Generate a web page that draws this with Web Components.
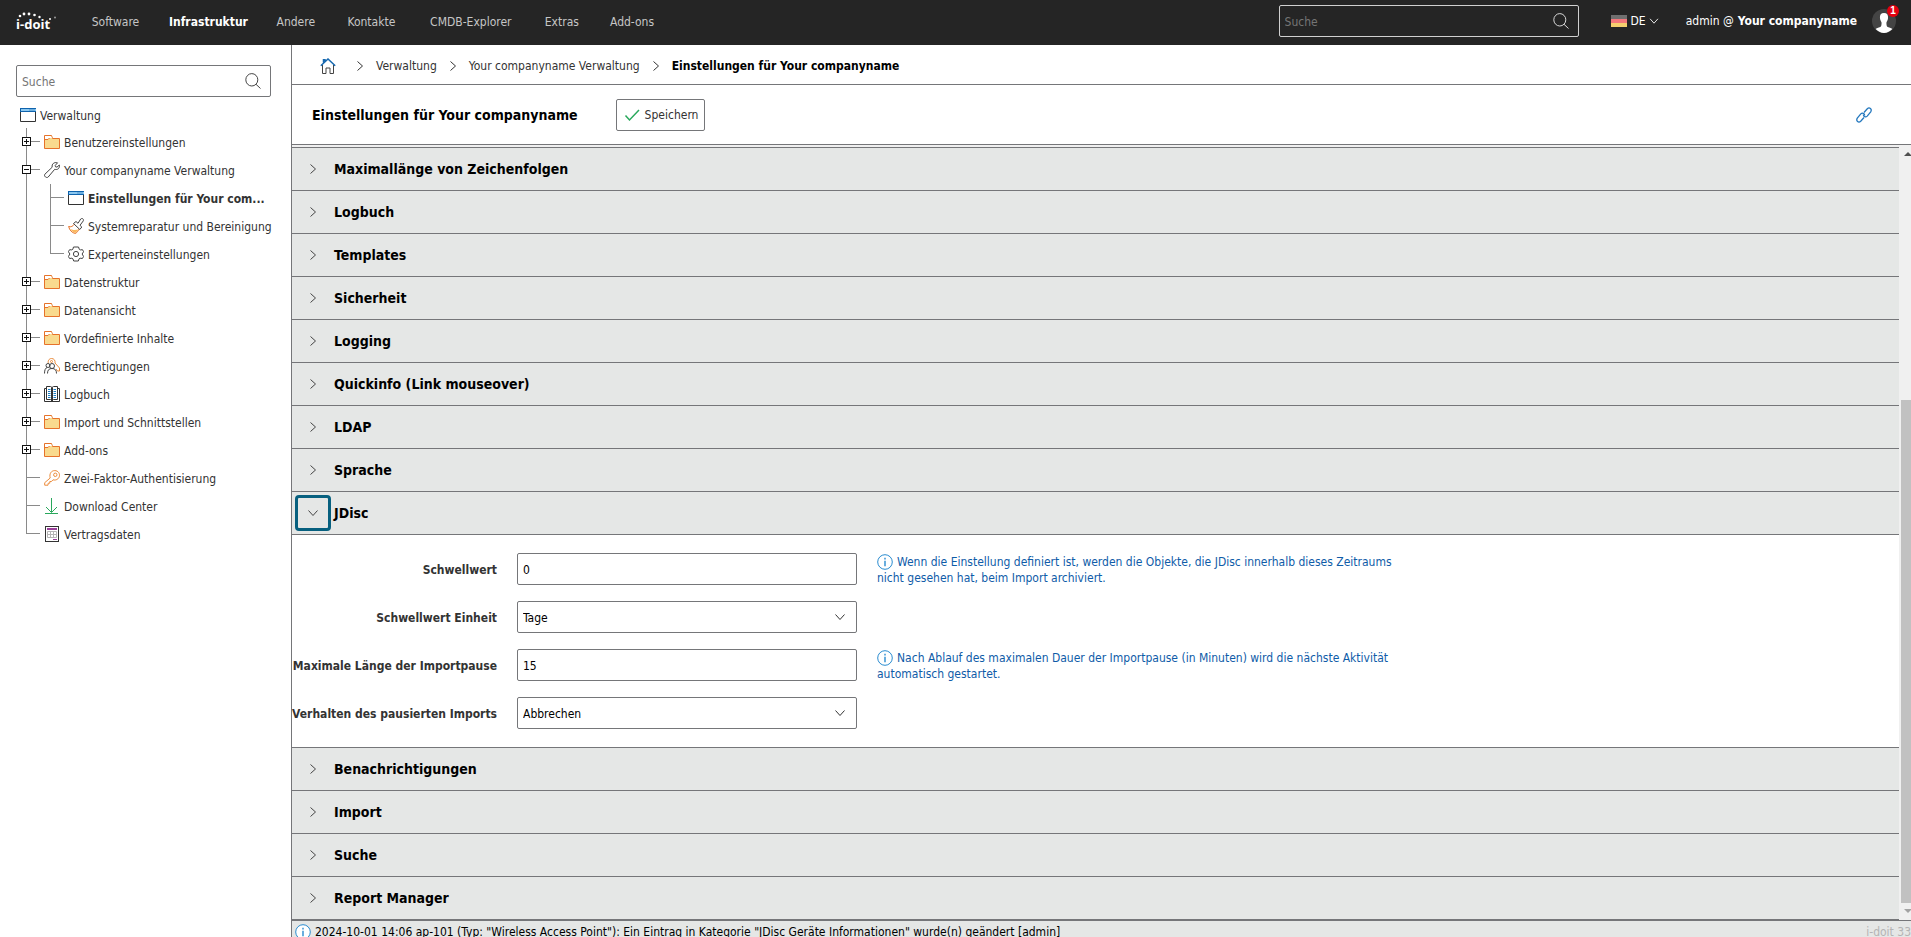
<!DOCTYPE html>
<html lang="de">
<head>
  <meta charset="utf-8">
  <meta name="viewport" content="width=device-width, initial-scale=1">
  <title>Einstellungen für Your companyname</title>
  <style>
    :root {
      --line: #757679;
      --panel: #e5e7e6;
      --text: #333333;
      --info: #0f5ca8;
    }

    body {
      margin: 0;
      height: 100vh;
      overflow: hidden;
      font: 12px/16px "DejaVu Sans Condensed", "DejaVu Sans", sans-serif;
      color: var(--text);
      background: white;
    }
  </style>
</head>
<body>
  <idoit-app></idoit-app>

  <script>
    const ICONS = {
      search: `<g fill="none" stroke="currentColor"><ellipse cx="6.8" cy="6.8" rx="6" ry="6.2"/><path d="M11 11.3l4.5 4.2"/></g>`,
      right: `<path d="M5.5 3.5l5 4.5-5 4.5" fill="none" stroke="currentColor"/>`,
      down: `<path d="M3.5 5.5l4.5 5 4.5-5" fill="none" stroke="currentColor"/>`,
      window: `<path d="M.5 2v12.500h15V2" fill="#fff" stroke="#333"/><path d="M0 1h16v4H0z" fill="#8cc8f0"/><path d="M0 1.500h16M0 4.500h16M.5 1v4M9.500 3h1M11.500 3h1M13.500 3h1" stroke="#0f63ad" fill="none"/>`,
      folder: `<path d="M.5 14.500v-13h7l1 3h7v10z" fill="#f9da8e" stroke="#e6722a"/><path d="M1 2h6l1 2H5L4 5.500H1z" fill="#fff"/><path d="M.5 5.500h3.500l1.500-1.500" fill="none" stroke="#e6722a"/>`,
      wrench: `<path d="M13.500.8l-2.300 2.700.3 1.300 1.500.3L15.300 3c.7 3.300-1.800 5.200-4.600 4.300L4.200 15c-1.500 1.500-4.700-.8-3.400-2.700L8.200 5.200C7.500 2 10.200-.2 13.500.8z" fill="#fff" stroke="#444"/>`,
      brush: `<path d="M.6 8.500c2.400.8 4.400-.3 5.900-2.500l5 4.500c-1.500 2.300-2.200 3.800-4 5C4 15 1.500 12 .6 8.500z" fill="#fff" stroke="#e6722a"/><path d="M2.500 11c3 1.500 5 1 8 .5L7.500 15C5.500 14.500 3.500 13 2.500 11z" fill="#fbb85c"/><path d="M5.500 5.500L8 3.500l2 1.800L12.700 1c1.800-1.400 3.400.4 2.500 2L12 7.300l1.800 1.700-2 2.500z" fill="#fff" stroke="#444"/>`,
      gear: `<g fill="none" stroke="#444"><circle cx="8" cy="8" r="2.600"/><path d="M5.500 1h5l.8 2.300 1 .6 2.200-.2 1.100 2-1.500 2.300L15.600 10.500l-1.200 2-2.300-.3-1 .6L10.300 15H5.700l-.8-2.200-1-.6-2.300.3-1.200-2L1.900 8 .4 5.700l1.200-2 2.200.2 1-.6z"/></g>`,
      roles: `<g fill="none"><path d="M4.500 5.500C3.500 3 5 .5 7.500.5s4 2 3.500 4.500l4.500 5v3h-2L12 11" stroke="#e98a3a"/><circle cx="7.500" cy="3.500" r="1" stroke="#e98a3a"/><g stroke="#444"><circle cx="4" cy="7.500" r="2"/><circle cx="8" cy="8" r="2.500"/><path d="M.5 15.500C.5 12 1.500 10 3 9.500M3.500 15.500c0-3.500 1.500-5 4.500-5s4.500 1.500 4.500 5"/></g></g>`,
      book: `<path d="M2 2.500H.5v13h15v-13H14" fill="#fff" stroke="#333"/><path d="M2.500.5h4l1.500 1 1.500-1h4v13h-4l-1.500 1-1.500-1h-4z" fill="#fff" stroke="#333"/><path d="M8 1.500V15" stroke="#333" stroke-width="2"/><path d="M4 3.500h2.500M4 5.500h2.500M4 7.500h2.500M4 9.500h2.500M4 11.500h2.500M9.500 3.500H12M9.500 5.500H12M9.500 7.500H12M9.500 9.500H12M9.500 11.500H12" stroke="#1b7fc4"/>`,
      key: `<g fill="#fff" stroke="#ec8c3c"><path d="M6.200 8C5 3.500 7.500.6 10.800.6s5.200 3 4.600 5.600C14.800 9 12 10.700 9 9.800L7.500 11.500H5.800v1.700H4.200l-.2 2H.7v-2.500z"/><circle cx="11.300" cy="4.800" r="1.700"/></g>`,
      download: `<path d="M7.500 0v14M2 9l5.500 5.500L13 9M1 15.500h13" fill="none" stroke="#29a85c"/>`,
      contract: `<rect x="1.500" y=".5" width="13" height="15" fill="#fff" stroke="#333"/><path d="M3 2h10v2H3zM9 13h4v1H9z" fill="#9a3f9a"/><path d="M3.500 5.500h9v6h-9zM3.500 8.500h9M6.500 5.500v6M9.500 5.500v6" fill="none" stroke="#b5b5b5"/>`,
      home: `<path d="M2.500 7v8.500h3.500V10h4v5.500h3.500V7" fill="none" stroke="#444"/><path d="M.8 7.800L8 1l7.200 6.800M3.500 4.500V1.800H5V3" fill="none" stroke="#1769b0" stroke-width="1.500"/>`,
      check: `<path d="M1.500 8.500L5.500 13 15 3" fill="none" stroke="#29a85c" stroke-width="1.500"/>`,
      link: `<g fill="none" stroke="#2478be" stroke-width="1.300"><path d="M8 5.500l3.300-3.800c2.200-2 5 .4 3.400 3.100l-3.500 4.300c-1.500 1.600-3.900.6-3.900-1.600"/><path d="M8 10.500l-3.300 3.800c-2.200 2-5-.4-3.400-3.100l3.500-4.300c1.500-1.600 3.900-.6 3.900 1.600"/></g>`,
      info: `<circle cx="8" cy="8" r="7.300" fill="#fff" stroke="#2a8cd0"/><path d="M8 3.800v1.700M8 6.800v5.400" stroke="#2a8cd0" stroke-width="1.400"/>`,
      flag: `<path d="M0 2h16v4H0z" fill="#6f6f6f"/><path d="M0 6h16v4H0z" fill="#f4777b"/><path d="M0 10h16v4H0z" fill="#f5cf6e"/>`,
      user: `<circle cx="8" cy="8" r="8" fill="#444"/><path d="M8 2.700c2 0 2.900 1.300 2.700 3.300-.1 1.500-.9 2.300-1.100 3.200.1 2.300.3 2.800 1.900 3.200 1 .3 1.700.6 2.100 1C12.200 15 10.200 16 8 16s-4.200-1-5.600-2.600c.4-.4 1.100-.7 2.100-1 1.600-.4 1.800-.9 1.900-3.200-.2-.9-1-1.700-1.100-3.200C5.100 4 6 2.700 8 2.700z" fill="#fff"/>`,
      plus: `<g transform="scale(1.77778)" stroke="#111"><path d="M.5.5h8v8h-8z" fill="#fff"/><path d="M2 4.500h5M4.500 2v5"/></g>`,
      minus: `<g transform="scale(1.77778)" stroke="#111"><path d="M.5.5h8v8h-8z" fill="#fff"/><path d="M2 4.500h5"/></g>`
    };

    class UiIcon extends HTMLElement {
      constructor() {
        super();
        this.attachShadow({ mode: "open" });
      }

      connectedCallback() {
        this.shadowRoot.innerHTML = `
          <style>
            :host {
              display: inline-block;
              flex: none;
              width: 16px;
              height: 16px;
            }

            svg {
              display: block;
              width: 100%;
              height: 100%;
            }
          </style>
          <svg viewBox="0 0 16 16" aria-hidden="true">${ICONS[this.getAttribute("name")]}</svg>
        `;
      }
    }

    /* Search box, light on white or dark inside the top bar */
    class SearchBox extends HTMLElement {
      constructor() {
        super();
        this.attachShadow({ mode: "open" });
        this.shadowRoot.innerHTML = `
          <style>
            :host {
              display: flex;
              align-items: center;
              box-sizing: border-box;
              height: 32px;
              padding: 0 9px 0 5px;
              border: 1px solid var(--line);
              border-radius: 2px;
              color: #444;
            }

            :host([dark]) {
              border-color: #d0d0d0;
              color: #d8d8d8;
            }

            input {
              flex: 1;
              min-width: 0;
              padding: 2px 0 0;
              border: 0;
              outline: 0;
              background: none;
              font: inherit;
              color: inherit;
            }

            input::placeholder {
              color: #757575;
              opacity: 1;
            }
          </style>
          <input type="text" placeholder="Suche" aria-label="Suche">
          <ui-icon name="search"></ui-icon>
        `;
      }
    }

    class TopBar extends HTMLElement {
      constructor() {
        super();
        this.attachShadow({ mode: "open" });
        this.shadowRoot.innerHTML = this.htmlTemplate;
      }

      get htmlTemplate() {
        const items = ["Software", "Infrastruktur", "Andere", "Kontakte", "CMDB-Explorer", "Extras", "Add-ons"];
        return `
          <style>
            :host {
              display: flex;
              align-items: center;
              flex: none;
              box-sizing: border-box;
              height: 45px;
              padding: 0 15px 3px 16px;
              background: #252525;
              color: white;
            }

            .logo {
              width: 42px;
              height: 22px;
              margin-right: 30px;
            }

            nav {
              display: flex;
              gap: 26px;
              flex: 1;
              padding-top: 2px;
            }

            nav a {
              display: grid;
              justify-items: center;
              color: #c6c6c6;
              text-decoration: none;
            }

            /* keeps the room of the bold state */
            nav a::after {
              content: attr(data-label);
              height: 0;
              overflow: hidden;
              visibility: hidden;
              font-weight: bold;
            }

            nav a.active {
              color: white;
              font-weight: bold;
            }

            search-box {
              width: 300px;
              margin-right: 32px;
            }

            .language {
              display: flex;
              align-items: center;
              gap: 4px;
              margin-right: 25px;
              padding: 0;
              border: 0;
              background: none;
              font: inherit;
              color: white;
            }

            .language span + ui-icon {
              width: 14px;
              height: 14px;
              margin-left: -3px;
            }

            .account {
              display: flex;
              gap: 4px;
              color: white;
              text-decoration: none;
            }

            .avatar {
              position: relative;
              margin-left: 15px;
              padding: 0;
              border: 0;
              background: none;
            }

            .avatar ui-icon {
              display: block;
              width: 24px;
              height: 24px;
            }

            .badge {
              position: absolute;
              top: -4px;
              right: -3px;
              width: 12px;
              border-radius: 6px;
              background: #e3000f;
              color: white;
              font-weight: bold;
              font-size: 10px;
              line-height: 12px;
              text-align: center;
            }
          </style>
          <svg class="logo" viewBox="0 0 42 22" role="img" aria-label="i-doit">
            <text x="0" y="19" fill="#fff" font-family="Open Sans, sans-serif" font-size="13" font-weight="700">i-doit</text>
            <g fill="#fff">
              <circle cx="4" cy="6" r="1.300"/><circle cx="8" cy="4" r="1.400"/>
              <circle cx="13" cy="4" r="1.400"/><circle cx="18.500" cy="5" r="1.300"/>
              <circle cx="23.500" cy="7" r="1.200"/><circle cx="34" cy="9" r="1"/>
              <circle cx="39" cy="7.500" r="1" fill="#999"/>
            </g>
          </svg>
          <nav>
            ${items.map((item) => `<a href="#" data-label="${item}"${item === "Infrastruktur" ? ' class="active"' : ""}>${item}</a>`).join("")}
          </nav>
          <search-box dark></search-box>
          <button class="language" type="button"><ui-icon name="flag"></ui-icon><span>DE</span><ui-icon name="down"></ui-icon></button>
          <a class="account" href="#"><span>admin @</span><b>Your companyname</b></a>
          <button class="avatar" type="button" aria-label="Benutzer"><ui-icon name="user"></ui-icon><span class="badge">1</span></button>
        `;
      }
    }

    class TreeItem extends HTMLElement {
      constructor() {
        super();
        this.attachShadow({ mode: "open" });
      }

      connectedCallback() {
        const toggle = this.getAttribute("toggle");
        this.shadowRoot.innerHTML = `
          <style>
            :host {
              display: block;
            }

            .row {
              display: flex;
              align-items: center;
              height: 28px;
              /* upright of the branch, then the twig to the icon */
              background:
                linear-gradient(#8a8a8a, #8a8a8a) 4px 0 / 1px 100% no-repeat,
                linear-gradient(#8a8a8a, #8a8a8a) 4px 13px / 14px 1px no-repeat;
            }

            :host([last]) .row {
              background:
                linear-gradient(#8a8a8a, #8a8a8a) 4px 0 / 1px 14px no-repeat,
                linear-gradient(#8a8a8a, #8a8a8a) 4px 13px / 14px 1px no-repeat;
            }

            .toggle {
              flex: none;
              width: 9px;
              height: 9px;
              margin: 0 13px 1px 0;
              padding: 0;
              border: 0;
              background: none;
            }

            .toggle ui-icon {
              display: block;
              width: 9px;
              height: 9px;
            }

            .spacer {
              flex: none;
              width: 22px;
            }

            a {
              display: flex;
              align-items: center;
              gap: 4px;
              color: inherit;
              text-decoration: none;
            }

            a span {
              padding-top: 2px;
              white-space: nowrap;
            }

            :host([selected]) span {
              font-weight: bold;
            }

            .children {
              padding-left: 24px;
              background: linear-gradient(#8a8a8a, #8a8a8a) 4px 0 / 1px 100% no-repeat;
            }
          </style>
          <div class="row">
            ${toggle ? `<button class="toggle" type="button" aria-label="Knoten umschalten"><ui-icon name="${toggle}"></ui-icon></button>` : `<div class="spacer"></div>`}
            <a href="#"><ui-icon name="${this.getAttribute("icon")}"></ui-icon><span>${this.getAttribute("label")}</span></a>
          </div>
          <div class="children"><slot></slot></div>
        `;
      }
    }

    class SideBar extends HTMLElement {
      constructor() {
        super();
        this.attachShadow({ mode: "open" });
        this.shadowRoot.innerHTML = `
          <style>
            :host {
              display: block;
              box-sizing: border-box;
              flex: none;
              width: 292px;
              padding: 20px 20px 0 16px;
              border-right: 1px solid var(--line);
            }

            .root {
              display: flex;
              align-items: center;
              gap: 4px;
              height: 20px;
              margin: 8px 0 3px 4px;
              color: inherit;
              text-decoration: none;
            }

            .root span {
              padding-top: 2px;
            }

            .tree {
              padding-left: 6px;
            }
          </style>
          <search-box></search-box>
          <a class="root" href="#"><ui-icon name="window"></ui-icon><span>Verwaltung</span></a>
          <div class="tree">
            <tree-item toggle="plus" icon="folder" label="Benutzereinstellungen"></tree-item>
            <tree-item toggle="minus" icon="wrench" label="Your companyname Verwaltung">
              <tree-item icon="window" label="Einstellungen für Your com..." selected></tree-item>
              <tree-item icon="brush" label="Systemreparatur und Bereinigung"></tree-item>
              <tree-item icon="gear" label="Experteneinstellungen" last></tree-item>
            </tree-item>
            <tree-item toggle="plus" icon="folder" label="Datenstruktur"></tree-item>
            <tree-item toggle="plus" icon="folder" label="Datenansicht"></tree-item>
            <tree-item toggle="plus" icon="folder" label="Vordefinierte Inhalte"></tree-item>
            <tree-item toggle="plus" icon="roles" label="Berechtigungen"></tree-item>
            <tree-item toggle="plus" icon="book" label="Logbuch"></tree-item>
            <tree-item toggle="plus" icon="folder" label="Import und Schnittstellen"></tree-item>
            <tree-item toggle="plus" icon="folder" label="Add-ons"></tree-item>
            <tree-item icon="key" label="Zwei-Faktor-Authentisierung"></tree-item>
            <tree-item icon="download" label="Download Center"></tree-item>
            <tree-item icon="contract" label="Vertragsdaten" last></tree-item>
          </div>
        `;
      }
    }

    class BreadCrumb extends HTMLElement {
      constructor() {
        super();
        this.attachShadow({ mode: "open" });
        this.shadowRoot.innerHTML = `
          <style>
            :host {
              display: flex;
              align-items: center;
              gap: 8px;
              box-sizing: border-box;
              height: 40px;
              padding: 2px 28px 0;
              border-bottom: 1px solid var(--line);
            }

            a {
              color: inherit;
              text-decoration: none;
            }

            a ui-icon {
              display: block;
            }

            a:first-of-type {
              margin-right: 8px;
            }

            b {
              color: black;
            }
          </style>
          <a href="#" aria-label="Startseite"><ui-icon name="home"></ui-icon></a>
          <ui-icon name="right"></ui-icon>
          <a href="#">Verwaltung</a>
          <ui-icon name="right"></ui-icon>
          <a href="#">Your companyname Verwaltung</a>
          <ui-icon name="right"></ui-icon>
          <b>Einstellungen für Your companyname</b>
        `;
      }
    }

    class TitleBar extends HTMLElement {
      constructor() {
        super();
        this.attachShadow({ mode: "open" });
        this.shadowRoot.innerHTML = `
          <style>
            :host {
              display: flex;
              align-items: center;
              height: 59px;
              padding: 0 39px 0 20px;
              border-bottom: 1px solid var(--line);
            }

            h1 {
              margin: 0 38px 0 0;
              color: black;
              font-size: 14px;
              line-height: 20px;
            }

            button {
              display: flex;
              align-items: center;
              gap: 5px;
              height: 32px;
              padding: 0 6px 0 7px;
              border: 1px solid var(--line);
              border-radius: 2px;
              background: white;
              font: inherit;
              color: inherit;
            }

            a {
              margin-left: auto;
            }

            a ui-icon {
              display: block;
            }
          </style>
          <h1>Einstellungen für Your companyname</h1>
          <button type="button"><ui-icon name="check"></ui-icon>Speichern</button>
          <a href="#" aria-label="Link"><ui-icon name="link"></ui-icon></a>
        `;
      }
    }

    class SettingsSection extends HTMLElement {
      constructor() {
        super();
        this.attachShadow({ mode: "open" });
      }

      connectedCallback() {
        const opened = this.hasAttribute("opened");
        this.shadowRoot.innerHTML = `
          <style>
            :host {
              display: block;
              border-top: 1px solid var(--line);
            }

            header {
              display: flex;
              align-items: center;
              gap: 3px;
              height: 42px;
              padding-left: 3px;
              background: var(--panel);
            }

            button {
              display: grid;
              place-items: center;
              width: 36px;
              height: 36px;
              padding: 0;
              border: 3px solid transparent;
              border-radius: 4px;
              background: none;
              color: #444;
            }

            :host([opened]) button {
              border-color: #07607f;
            }

            h2 {
              margin: 0;
              color: black;
              font-size: 14px;
              line-height: 20px;
            }

            .content {
              display: none;
            }

            :host([opened]) .content {
              display: flex;
              flex-direction: column;
              gap: 16px;
              padding: 18px 0;
              border-top: 1px solid var(--line);
            }
          </style>
          <header>
            <button type="button" aria-label="${this.getAttribute("label")}"><ui-icon name="${opened ? "down" : "right"}"></ui-icon></button>
            <h2>${this.getAttribute("label")}</h2>
          </header>
          <div class="content"><slot></slot></div>
        `;
      }
    }

    class FormRow extends HTMLElement {
      constructor() {
        super();
        this.attachShadow({ mode: "open" });
      }

      connectedCallback() {
        const value = this.getAttribute("value");
        const isSelect = this.getAttribute("type") === "select";
        this.shadowRoot.innerHTML = `
          <style>
            :host {
              display: flex;
              height: 32px;
            }

            label {
              flex: none;
              width: 205px;
              margin-right: 20px;
              font-weight: bold;
              line-height: 34px;
              text-align: right;
              white-space: nowrap;
            }

            .field {
              display: grid;
              flex: none;
              align-items: center;
              width: 340px;
            }

            input,
            select {
              grid-area: 1 / 1;
              box-sizing: border-box;
              width: 100%;
              height: 32px;
              margin: 0;
              padding: 1px 5px 0;
              border: 1px solid var(--line);
              border-radius: 2px;
              appearance: none;
              background: white;
              font: inherit;
              color: black;
            }

            .field ui-icon {
              grid-area: 1 / 1;
              justify-self: end;
              margin-right: 9px;
              pointer-events: none;
            }

            .hint {
              max-width: 520px;
              margin: 1px 0 0 20px;
              color: var(--info);
            }

            .hint ui-icon {
              margin-right: 4px;
              vertical-align: top;
            }
          </style>
          <label for="control">${this.getAttribute("label")}</label>
          <div class="field">
            ${isSelect ? `<select id="control"><option>${value}</option></select><ui-icon name="down"></ui-icon>` : `<input id="control" type="text" value="${value}">`}
          </div>
          ${this.textContent.trim() ? `<div class="hint"><ui-icon name="info"></ui-icon><slot></slot></div>` : ""}
        `;
      }
    }

    class ScrollTrack extends HTMLElement {
      constructor() {
        super();
        this.attachShadow({ mode: "open" });
        this.shadowRoot.innerHTML = `
          <style>
            :host {
              display: flex;
              flex-direction: column;
              flex: none;
              width: 12px;
              background: #f0f0f0;
            }

            svg {
              flex: none;
              align-self: flex-end;
              width: 7px;
              height: 17px;
            }

            .before {
              flex: 238;
            }

            .thumb {
              flex: 503;
              margin-left: 2px;
              background: #c1c1c1;
            }
          </style>
          <svg viewBox="0 0 7 17" aria-hidden="true"><path d="M0 11l4-4 4 4z" fill="#505050"/></svg>
          <div class="before"></div>
          <div class="thumb"></div>
          <svg viewBox="0 0 7 17" aria-hidden="true"><path d="M0 6l4 4 4-4z" fill="#a3a3a3"/></svg>
        `;
      }
    }

    class StatusBar extends HTMLElement {
      constructor() {
        super();
        this.attachShadow({ mode: "open" });
        this.shadowRoot.innerHTML = `
          <style>
            :host {
              display: flex;
              align-items: center;
              gap: 4px;
              height: 22px;
              padding-left: 3px;
              border-top: 1px solid var(--line);
              background: var(--panel);
              color: black;
              white-space: nowrap;
            }

            .version {
              margin-left: auto;
              color: #b4b4b4;
            }
          </style>
          <ui-icon name="info"></ui-icon>
          <span>2024-10-01 14:06 ap-101 (Typ: "Wireless Access Point"): Ein Eintrag in Kategorie "JDisc Geräte Informationen" wurde(n) geändert [admin]</span>
          <span class="version">i-doit 33</span>
        `;
      }
    }

    class IdoitApp extends HTMLElement {
      constructor() {
        super();
        this.attachShadow({ mode: "open" });
        this.shadowRoot.innerHTML = `
          <style>
            :host {
              display: flex;
              flex-direction: column;
              height: 100%;
            }

            .body {
              display: flex;
              flex: 1;
              min-height: 0;
            }

            main {
              flex: 1;
              min-width: 0;
            }

            .scroller {
              display: flex;
              background: #f0f0f0;
            }

            .sections {
              flex: 1;
              min-width: 0;
              margin-top: 2px;
              border-bottom: 1px solid var(--line);
              background: white;
            }
          </style>
          <top-bar></top-bar>
          <div class="body">
            <side-bar></side-bar>
            <main>
              <bread-crumb></bread-crumb>
              <title-bar></title-bar>
              <div class="scroller">
                <div class="sections">
                  <settings-section label="Maximallänge von Zeichenfolgen"></settings-section>
                  <settings-section label="Logbuch"></settings-section>
                  <settings-section label="Templates"></settings-section>
                  <settings-section label="Sicherheit"></settings-section>
                  <settings-section label="Logging"></settings-section>
                  <settings-section label="Quickinfo (Link mouseover)"></settings-section>
                  <settings-section label="LDAP"></settings-section>
                  <settings-section label="Sprache"></settings-section>
                  <settings-section label="JDisc" opened>
                    <form-row label="Schwellwert" value="0">Wenn die Einstellung definiert ist, werden die Objekte, die JDisc innerhalb dieses Zeitraums nicht gesehen hat, beim Import archiviert.</form-row>
                    <form-row label="Schwellwert Einheit" type="select" value="Tage"></form-row>
                    <form-row label="Maximale Länge der Importpause" value="15">Nach Ablauf des maximalen Dauer der Importpause (in Minuten) wird die nächste Aktivität automatisch gestartet.</form-row>
                    <form-row label="Verhalten des pausierten Imports" type="select" value="Abbrechen"></form-row>
                  </settings-section>
                  <settings-section label="Benachrichtigungen"></settings-section>
                  <settings-section label="Import"></settings-section>
                  <settings-section label="Suche"></settings-section>
                  <settings-section label="Report Manager"></settings-section>
                </div>
                <scroll-track></scroll-track>
              </div>
              <status-bar></status-bar>
            </main>
          </div>
        `;
      }
    }

    customElements.define("ui-icon", UiIcon);
    customElements.define("search-box", SearchBox);
    customElements.define("top-bar", TopBar);
    customElements.define("tree-item", TreeItem);
    customElements.define("side-bar", SideBar);
    customElements.define("bread-crumb", BreadCrumb);
    customElements.define("title-bar", TitleBar);
    customElements.define("settings-section", SettingsSection);
    customElements.define("form-row", FormRow);
    customElements.define("scroll-track", ScrollTrack);
    customElements.define("status-bar", StatusBar);
    customElements.define("idoit-app", IdoitApp);
  </script>
</body>
</html>
